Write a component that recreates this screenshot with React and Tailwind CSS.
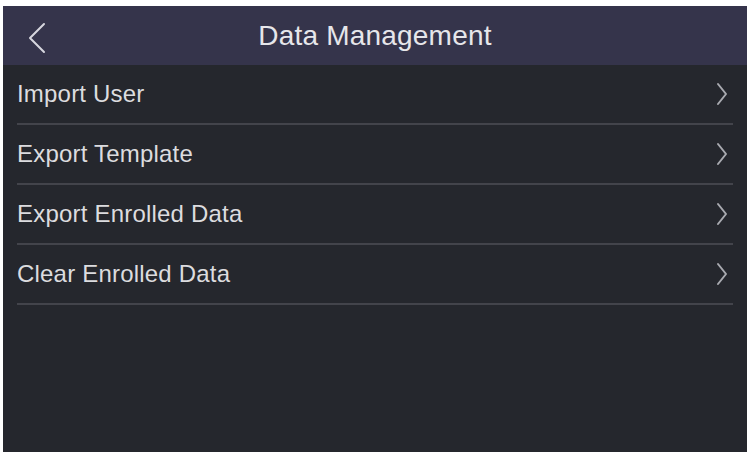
export default function App() {
  const items = ["Import User", "Export Template", "Export Enrolled Data", "Clear Enrolled Data"];
  return (
    <div className="w-[751px] h-[457px] bg-white pt-[6px] pl-[3px]" style={{ fontFamily: '"Liberation Sans", Arial, sans-serif' }}>
      <div className="w-[744px] h-[446px] bg-[#25272d] flex flex-col">
        <div className="h-[59px] bg-[#35344b] relative flex items-center justify-center">
          <svg className="absolute left-[23px] top-[16px]" width="22" height="32" viewBox="0 0 22 32">
            <path d="M18 2 L4 16 L18 30" fill="none" stroke="#d6d6de" strokeWidth="2" strokeLinecap="round" strokeLinejoin="round" />
          </svg>
          <span className="text-[28px] text-[#e6e6ea] tracking-[0.2px]">Data Management</span>
        </div>
        <div className="flex flex-col px-[14px]">
          {items.map((t) => (
            <div key={t} className="h-[60px] border-b-2 border-[#43444b] flex items-center justify-between pr-[5px]">
              <span className="text-[24px] text-[#dcdcdf] tracking-[0.2px]">{t}</span>
              <svg width="12" height="24" viewBox="0 0 12 24">
                <path d="M2 2 L10 12 L2 22" fill="none" stroke="#a9aab0" strokeWidth="2" strokeLinecap="round" strokeLinejoin="round" />
              </svg>
            </div>
          ))}
        </div>
      </div>
    </div>
  );
}
